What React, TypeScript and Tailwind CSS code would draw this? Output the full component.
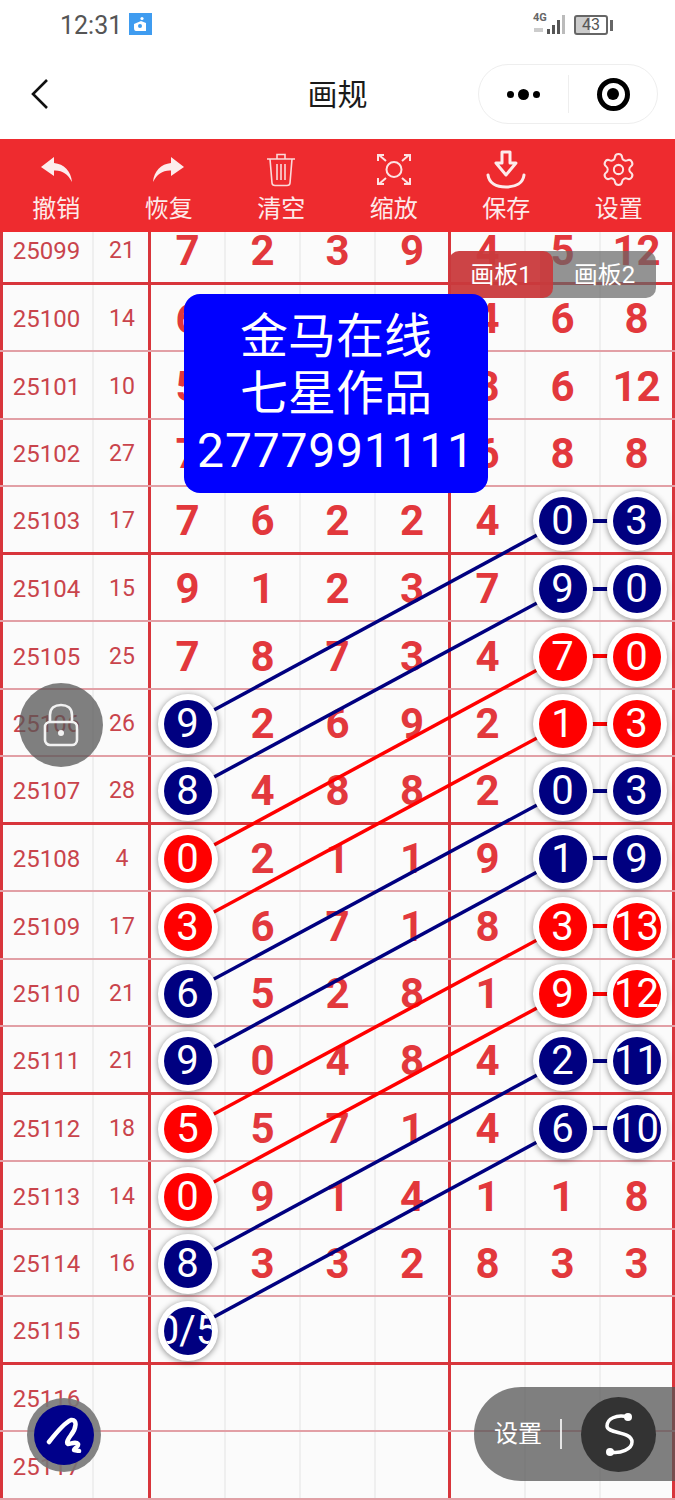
import React from 'react';
import { Settings } from 'lucide-react';

const NAVY = '#000080';
const RED = '#ff0000';

type Ball = { v: string; c: 'n' | 'r' };
type Cell = string | Ball;

const n = (v: string): Ball => ({ v, c: 'n' });
const r = (v: string): Ball => ({ v, c: 'r' });

const rows: { id: string; sum: string; cells: Cell[] }[] = [
  { id: '25099', sum: '21', cells: ['7', '2', '3', '9', '4', '5', '12'] },
  { id: '25100', sum: '14', cells: ['6', '', '', '', '4', '6', '8'] },
  { id: '25101', sum: '10', cells: ['5', '', '', '', '8', '6', '12'] },
  { id: '25102', sum: '27', cells: ['7', '', '', '', '6', '8', '8'] },
  { id: '25103', sum: '17', cells: ['7', '6', '2', '2', '4', n('0'), n('3')] },
  { id: '25104', sum: '15', cells: ['9', '1', '2', '3', '7', n('9'), n('0')] },
  { id: '25105', sum: '25', cells: ['7', '8', '7', '3', '4', r('7'), r('0')] },
  { id: '25106', sum: '26', cells: [n('9'), '2', '6', '9', '2', r('1'), r('3')] },
  { id: '25107', sum: '28', cells: [n('8'), '4', '8', '8', '2', n('0'), n('3')] },
  { id: '25108', sum: '4', cells: [r('0'), '2', '1', '1', '9', n('1'), n('9')] },
  { id: '25109', sum: '17', cells: [r('3'), '6', '7', '1', '8', r('3'), r('13')] },
  { id: '25110', sum: '21', cells: [n('6'), '5', '2', '8', '1', r('9'), r('12')] },
  { id: '25111', sum: '21', cells: [n('9'), '0', '4', '8', '4', n('2'), n('11')] },
  { id: '25112', sum: '18', cells: [r('5'), '5', '7', '1', '4', n('6'), n('10')] },
  { id: '25113', sum: '14', cells: [r('0'), '9', '1', '4', '1', '1', '8'] },
  { id: '25114', sum: '16', cells: [n('8'), '3', '3', '2', '8', '3', '3'] },
  { id: '25115', sum: '', cells: [n('0/5'), '', '', '', '', '', ''] },
  { id: '25116', sum: '', cells: ['', '', '', '', '', '', ''] },
  { id: '25117', sum: '', cells: ['', '', '', '', '', '', ''] },
];

// diagonal links: [left ball y, right ball y, colour]
const links: [number, number, string][] = [
  [724, 521, NAVY],
  [791, 589, NAVY],
  [859, 656, RED],
  [926, 724, RED],
  [993, 791, NAVY],
  [1061, 858, NAVY],
  [1128, 926, RED],
  [1196, 994, RED],
  [1264, 1061, NAVY],
  [1331, 1128, NAVY],
];

function UndoIcon({ flip }: { flip?: boolean }) {
  return (
    <svg width="31" height="25" viewBox="0 0 31 25" className={flip ? '-scale-x-100' : ''}>
      <path d="M13 0 L0 10 L13 19 V13.5 C21 13 27 17 31 25 C30 14 23 7 13 6 Z" fill="#fdecec" />
    </svg>
  );
}

function TrashIcon() {
  return (
    <svg width="30" height="35" viewBox="0 0 30 35" fill="none" stroke="#fbd9d9" strokeWidth="1.6">
      <path d="M1 7 H29 M11 7 V2.5 H19 V7" />
      <path d="M4 7 L6 31 Q6.2 33.5 9 33.5 H21 Q23.8 33.5 24 31 L26 7" />
      <path d="M11 12 V28 M15 12 V28 M19 12 V28" />
    </svg>
  );
}

function FocusIcon() {
  return (
    <svg width="34" height="33" viewBox="0 0 34 33" fill="none" stroke="#fde3e3" strokeWidth="2">
      <circle cx="17" cy="16.5" r="7.5" />
      <path d="M1 8 V2 H7 M2 2 L9 8 M33 8 V2 H27 M32 2 L25 8 M1 25 V31 H7 M2 31 L9 25 M33 25 V31 H27 M32 31 L25 25" />
    </svg>
  );
}

function SaveIcon() {
  return (
    <svg width="40" height="39" viewBox="0 0 40 39" fill="none" stroke="#fdecec" strokeWidth="3" strokeLinejoin="round" strokeLinecap="round">
      <path d="M16 2 H24 V13 H30 L20 25 L10 13 H16 Z" />
      <path d="M2 25 C3 33 10 37 20 37 C30 37 37 33 38 25" />
    </svg>
  );
}

function ToolItem({ icon, label }: { icon: React.ReactNode; label: string }) {
  return (
    <div className="flex flex-col items-center">
      <div className="flex h-[42px] items-center justify-center">{icon}</div>
      <span className="mt-[3px] text-[24px] leading-[32px] text-[#fdeaea]">{label}</span>
    </div>
  );
}

function BallCell({ ball }: { ball: Ball }) {
  return (
    <div className="relative z-20 h-[60px] w-[60px] rounded-full bg-white p-[6px] shadow-[0_1px_6px_rgba(0,0,0,0.45)]">
      <div
        className={`flex h-full w-full items-center justify-center overflow-hidden whitespace-nowrap rounded-full text-[40px] font-normal leading-none text-white ${
          ball.c === 'n' ? 'bg-[#000080]' : 'bg-[#ff0000]'
        }`}
      >
        {ball.v}
      </div>
    </div>
  );
}

function BoardRow({ row, index }: { row: (typeof rows)[number]; index: number }) {
  const thick = index % 4 === 0;
  return (
    <div
      className={`grid h-[67.5px] grid-cols-[94px_57px_75px_75px_75px_75px_75px_75px_74px] ${
        thick ? 'border-b-[3px] border-[#d8353b]' : 'border-b-2 border-[#e2a0a6]'
      }`}
    >
      <div className="flex items-center justify-center border-r-2 border-l-[3px] border-r-[#efefef] border-l-[#d8353b] pr-[2px] pt-[4px] text-[24px] text-[#c9444c]">
        {row.id}
      </div>
      <div className="flex items-center justify-center border-r-[3px] border-[#d8353b] pl-[2px] pt-[4px] text-[23px] text-[#c9444c]">
        {row.sum}
      </div>
      {row.cells.map((cell, i) => (
        <div
          key={i}
          className={`flex items-center justify-center pt-[4px] text-[42px] font-bold leading-none text-[#e2383c] ${
            i === 3 || i === 6 ? 'border-r-[3px] border-[#d8353b]' : 'border-r-2 border-[#efefef]'
          }`}
        >
          {typeof cell === 'string' ? cell : <BallCell ball={cell} />}
        </div>
      ))}
    </div>
  );
}

export default function App() {
  return (
    <div
      className="relative flex h-[1500px] w-[675px] flex-col overflow-hidden bg-white"
      style={{ fontFamily: 'Roboto, "Noto Sans CJK SC", sans-serif' }}
    >
      {/* status bar */}
      <div className="flex h-[50px] items-center justify-between pl-[60px] pr-[62px]">
        <div className="flex items-center gap-[7px]">
          <span className="text-[25px] leading-none text-[#555]">12:31</span>
          <div className="-mt-[2px] flex h-[22px] w-[23px] items-center justify-center bg-[#3f9cf0]">
            <svg width="15" height="17" viewBox="0 0 15 17" fill="#fff">
              <path d="M1 8 L8 5 L13 7 V15 H3 Q1 15 1 12 Z" />
              <circle cx="9" cy="2.5" r="1.6" />
              <circle cx="7" cy="10" r="2" fill="#3f9cf0" />
            </svg>
          </div>
        </div>
        <div className="flex items-center gap-[8px]">
          <div className="relative h-[22px] w-[33px]">
            <span className="absolute left-0 top-[-2px] text-[11px] font-bold leading-[12px] text-[#666]">4G</span>
            <svg width="33" height="22" viewBox="0 0 33 22" className="absolute left-0 top-0">
              <rect x="1" y="14" width="9" height="4" fill="#ccc" />
              <rect x="14" y="15" width="3" height="5" fill="#555" />
              <rect x="19" y="11" width="3" height="9" fill="#555" />
              <rect x="24" y="6" width="3" height="14" fill="#555" />
              <rect x="29" y="1" width="3" height="19" fill="#bbb" />
            </svg>
          </div>
          <div className="flex items-center gap-[2px]">
            <div className="flex h-[20px] w-[34px] items-center justify-center rounded-[3px] border-2 border-[#666] bg-[linear-gradient(90deg,#ccc_45%,#fff_45%)] text-[16px] leading-none text-[#555]">
              43
            </div>
            <div className="h-[11px] w-[3px] bg-[#666]" />
          </div>
        </div>
      </div>

      {/* nav bar */}
      <div className="relative flex h-[89px] items-center justify-center">
        <svg width="20" height="32" viewBox="0 0 20 32" fill="none" stroke="#111" strokeWidth="2.6" className="absolute left-[30px] top-[28px]">
          <path d="M17 2 L3 16 L17 30" />
        </svg>
        <span className="text-[30px] leading-none text-[#1a1a1a]">画规</span>
        <div className="absolute left-[478px] top-[14px] flex h-[60px] w-[180px] items-center rounded-full border border-[#eee]">
          <div className="flex w-[89px] items-center justify-center gap-[4px]">
            <span className="h-[7px] w-[7px] rounded-full bg-black" />
            <span className="h-[11px] w-[11px] rounded-full bg-black" />
            <span className="h-[7px] w-[7px] rounded-full bg-black" />
          </div>
          <div className="h-[38px] w-px bg-[#eee]" />
          <div className="flex flex-1 items-center justify-center">
            <div className="flex h-[33px] w-[33px] items-center justify-center rounded-full border-[5px] border-black">
              <div className="h-[12px] w-[12px] rounded-full bg-black" />
            </div>
          </div>
        </div>
      </div>

      {/* toolbar */}
      <div className="relative z-40 grid h-[93px] grid-cols-6 bg-[#ee2b2f] pt-[9px]">
        <ToolItem icon={<UndoIcon />} label="撤销" />
        <ToolItem icon={<UndoIcon flip />} label="恢复" />
        <ToolItem icon={<TrashIcon />} label="清空" />
        <ToolItem icon={<FocusIcon />} label="缩放" />
        <ToolItem icon={<SaveIcon />} label="保存" />
        <ToolItem icon={<Settings size={37} strokeWidth={1.3} color="#fde3e3" />} label="设置" />
      </div>

      {/* board */}
      <div className="min-h-0 flex-1 overflow-hidden bg-[#fbfbfb]">
        <div className="mt-[-15px]">
          {rows.map((row, i) => (
            <BoardRow key={row.id} row={row} index={i} />
          ))}
        </div>
      </div>

      {/* connecting lines */}
      <svg width="675" height="1500" viewBox="0 0 675 1500" className="pointer-events-none absolute left-0 top-0 z-10">
        {links.map(([y1, y2, color]) => (
          <g key={y1} stroke={color} strokeWidth="3.5">
            <line x1="188" y1={y1} x2="563" y2={y2} />
            <line x1="590" y1={y2} x2="610" y2={y2} strokeWidth="4" />
          </g>
        ))}
      </svg>

      {/* board tabs */}
      <div className="absolute left-[449px] top-[251px] z-30 flex h-[47px] text-[24px] text-white">
        <div className="relative z-10 flex w-[104px] items-center justify-center rounded-[10px] bg-[#c93a3c]/95">画板1</div>
        <div className="-ml-[13px] flex w-[116px] items-center justify-center rounded-r-[10px] bg-[#666]/70 pl-[13px]">画板2</div>
      </div>

      {/* watermark */}
      <div className="absolute left-[184px] top-[294px] z-30 flex h-[199px] w-[304px] flex-col items-center justify-center rounded-[16px] bg-[#0000ff] text-[48px] leading-[57px] text-white">
        <span>金马在线</span>
        <span>七星作品</span>
        <span className="tracking-[0.8px]">2777991111</span>
      </div>

      {/* lock */}
      <div className="absolute left-[19px] top-[683px] z-30 flex h-[84px] w-[84px] items-center justify-center rounded-full bg-[#555]/75">
        <svg width="36" height="44" viewBox="0 0 36 44" fill="none" stroke="#f2f2f2" strokeWidth="2.6">
          <path d="M7 20 V12 C7 5 12 2 18 2 C24 2 29 5 29 12 V20" />
          <rect x="2" y="19" width="32" height="23" rx="5" />
          <circle cx="18" cy="30" r="3" fill="#f2f2f2" stroke="none" />
        </svg>
      </div>

      {/* pen */}
      <div className="absolute left-[27px] top-[1398px] z-30 flex h-[74px] w-[74px] items-center justify-center rounded-full bg-[#777]/90">
        <div className="flex h-[60px] w-[60px] items-center justify-center rounded-full bg-[#00008a]">
          <svg width="36" height="36" viewBox="0 0 36 36" fill="none" stroke="#fff" strokeWidth="4.5" strokeLinecap="round" strokeLinejoin="round">
            <path d="M3 25 C10 16 18 6 25 3 C32 2 30 12 25 18 C22 22 20 26 22 27 C25 27 30 24 32 27 C33 30 28 31 28 33 L33 34" />
          </svg>
        </div>
      </div>

      {/* settings pill */}
      <div className="absolute left-[474px] top-[1387px] z-30 flex h-[94px] w-[201px] items-center rounded-l-[47px] bg-[#555]/75 pl-[20px]">
        <span className="text-[24px] leading-none text-white">设置</span>
        <div className="ml-[18px] h-[30px] w-[2px] bg-white/80" />
        <div className="ml-[19px] flex h-[75px] w-[75px] items-center justify-center rounded-full bg-[#333]">
          <svg width="36" height="46" viewBox="0 0 36 46" fill="none" stroke="#fff" strokeWidth="3.5">
            <path d="M27 6 C15 3 6 8 6 15 C6 23 31 20 31 31 C31 38 20 43 9 41" />
            <circle cx="27" cy="6" r="4" fill="#fff" stroke="none" />
            <circle cx="9" cy="41" r="4" fill="#fff" stroke="none" />
          </svg>
        </div>
      </div>
    </div>
  );
}
